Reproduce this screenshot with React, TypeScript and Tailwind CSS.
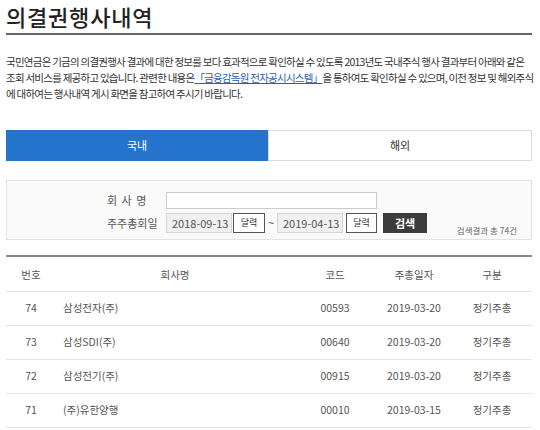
const rows = [
  { no: 74, name: "삼성전자(주)", code: "00593", date: "2019-03-20", type: "정기주총" },
  { no: 73, name: "삼성SDI(주)", code: "00640", date: "2019-03-20", type: "정기주총" },
  { no: 72, name: "삼성전기(주)", code: "00915", date: "2019-03-20", type: "정기주총" },
  { no: 71, name: "(주)유한양행", code: "00010", date: "2019-03-15", type: "정기주총" },
];

export default function App() {
  return (
    <div
      className="w-[540px] h-[430px] overflow-hidden bg-white pl-[6px] pr-[8px] text-[#333]"
      style={{ fontFamily: '"Noto Sans CJK KR", "Noto Sans", sans-serif' }}
    >
      {/* Title */}
      <h1 className="text-[22px] leading-[32px] font-medium text-[#222] tracking-[0.8px] border-b-2 border-[#666] h-[35px]">
        의결권행사내역
      </h1>

      {/* Intro */}
      <p className="mt-[19px] text-[10.5px] leading-[16px] text-[#333] whitespace-nowrap tracking-[-0.75px]">
        국민연금은 기금의 의결권행사 결과에 대한 정보를 보다 효과적으로 확인하실 수 있도록 2013년도 국내주식 행사 결과부터 아래와 같은
        <br />
        조회 서비스를 제공하고 있습니다. 관련한 내용은
        <a href="#" className="text-[#2a5fb5] underline">
          「금융감독원 전자공시시스템」
        </a>
        을 통하여도 확인하실 수 있으며, 이전 정보 및 해외주식
        <br />
        에 대하여는 행사내역 게시 화면을 참고하여 주시기 바랍니다.
      </p>

      {/* Tabs */}
      <div className="mt-[28px] flex h-[31px] text-[11px]">
        <button className="flex-1 bg-[#2474cc] text-white">국내</button>
        <button className="flex-1 border border-[#dcdcdc] bg-white text-[#333]">해외</button>
      </div>

      {/* Search box */}
      <div className="mt-[19px] h-[60px] border border-[#e2e2e2] bg-[#fafafa] pt-[11px] pl-[100px] pr-[14px] text-[11px] text-[#555]">
        <div className="flex h-[17px] items-center">
          <span className="w-[59px] tracking-[1px]">회 사 명</span>
          <input className="h-[17px] w-[211px] border border-[#ccc] bg-white" />
        </div>
        <div className="mt-[4px] flex h-[20px] items-center">
          <span className="w-[59px]">주주총회일</span>
          <div className="flex h-[20px] w-[66px] items-center border border-[#d5d5d5] bg-[#f0f0f0] pl-[5px] text-[#555]">
            2018-09-13
          </div>
          <button className="ml-[1px] h-[20px] w-[32px] border border-[#555] bg-white text-[9px] text-[#333]">
            달력
          </button>
          <span
            className="w-[12px] text-center text-[11px] text-[#555]"
            style={{ fontFamily: '"Liberation Sans", sans-serif' }}
          >
            ~
          </span>
          <div className="flex h-[20px] w-[66px] items-center border border-[#d5d5d5] bg-[#f0f0f0] pl-[5px] text-[#555]">
            2019-04-13
          </div>
          <button className="ml-[3px] h-[20px] w-[31px] border border-[#555] bg-white text-[9px] text-[#333]">
            달력
          </button>
          <button className="ml-[6px] h-[20px] w-[44px] bg-[#3c3c3c] text-[11px] font-bold text-white">
            검색
          </button>
          <span className="ml-auto self-end mb-[-4px] text-[8.5px] text-[#666]">검색결과 총 74건</span>
        </div>
      </div>

      {/* Table */}
      <table className="mt-[15px] w-full table-fixed border-collapse text-[10.5px] text-[#555]">
        <colgroup>
          <col className="w-[50px]" />
          <col className="w-[238px]" />
          <col className="w-[82px]" />
          <col className="w-[76px]" />
          <col className="w-[80px]" />
        </colgroup>
        <thead>
          <tr className="h-[35px] border-t-2 border-b border-t-[#888] border-b-[#e5e5e5]">
            <th className="pt-[3px] font-normal">번호</th>
            <th className="pt-[3px] font-normal">회사명</th>
            <th className="pt-[3px] font-normal">코드</th>
            <th className="pt-[3px] font-normal">주총일자</th>
            <th className="pt-[3px] font-normal">구분</th>
          </tr>
        </thead>
        <tbody>
          {rows.map((r) => (
            <tr key={r.no} className="h-[34px] border-b border-[#e5e5e5]">
              <td className="text-center">{r.no}</td>
              <td className="pl-[7px]">{r.name}</td>
              <td className="text-center">{r.code}</td>
              <td className="text-center">{r.date}</td>
              <td className="text-center">{r.type}</td>
            </tr>
          ))}
        </tbody>
      </table>
    </div>
  );
}
